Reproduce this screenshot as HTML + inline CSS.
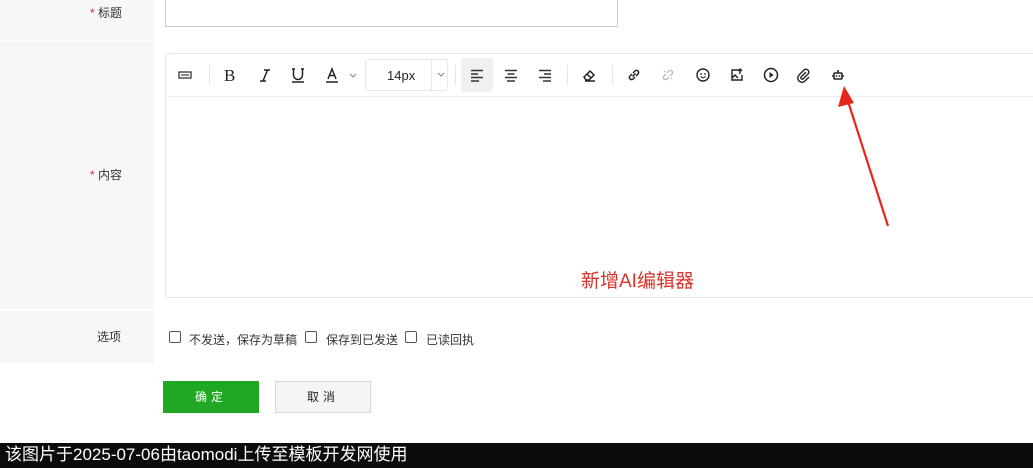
<!DOCTYPE html>
<html><head><meta charset="utf-8"><style>
*{margin:0;padding:0;box-sizing:border-box}
body{width:1033px;height:468px;overflow:hidden;background:#fff;font-family:"Liberation Sans","Noto Sans CJK SC",sans-serif;position:relative;font-size:12px;color:#333}
.abs{position:absolute}
.lab{position:absolute;left:0;width:154px;background:#f7f7f7;text-align:right;padding-right:32px}
.star{color:#c33}
.ic{position:absolute;top:65px;width:20px;height:20px}
.sep{position:absolute;top:65px;width:1px;height:20px;background:#e5e5e5}
.cb{position:absolute;top:331px;width:12px;height:12px;border:1px solid #555;border-radius:2px;background:#fff}
</style></head><body>
<div class="lab" style="top:0;height:40px;line-height:26px">
<span class="star">*</span> 标题</div>
<div class="lab" style="top:41px;height:268px;line-height:268px"><span class="star">*</span> 内容</div>
<div class="lab" style="top:311px;height:52px;line-height:52px;padding-right:33px">选项</div>
<div class="abs" style="left:165px;top:-1px;width:453px;height:28px;border:1px solid #ccc"></div>
<div class="abs" style="left:165px;top:53px;width:880px;height:245px;border:1px solid #e8e8e8;border-radius:4px"></div>
<div class="abs" style="left:166px;top:96px;width:870px;height:1px;background:#ececec"></div>
<svg class="ic" style="left:175px" viewBox="0 0 20 20"><rect x="4" y="7" width="12" height="6" fill="#fff" stroke="#444" stroke-width="1.4"/><rect x="6" y="9" width="8" height="2" fill="#888"/></svg>
<div class="sep" style="left:209px"></div>
<div class="abs" style="left:224px;top:66px;font:17px 'Liberation Serif',serif;color:#222">B</div>
<svg class="ic" style="left:255px" viewBox="0 0 20 20"><path d="M9 5h6M5 16h6M12.5 5L8 16" stroke="#222" stroke-width="1.5" fill="none"/></svg>
<svg class="ic" style="left:288px" viewBox="0 0 20 20"><path d="M5.5 4v6a4.5 4.5 0 009 0V4M4 4h3M13 4h3M4 17h12" stroke="#222" stroke-width="1.5" fill="none"/></svg>
<svg class="ic" style="left:322px" viewBox="0 0 20 20"><path d="M6 14l4-10 4 10M7.5 10.5h5M4 17h12" stroke="#222" stroke-width="1.5" fill="none"/></svg>
<svg class="ic" style="left:343px" viewBox="0 0 20 20"><path d="M7 9l3 3 3-3" stroke="#888" stroke-width="1" fill="none"/></svg>
<div class="abs" style="left:365px;top:59px;width:83px;height:32px;border:1px solid #e8e8e8;border-radius:3px"></div>
<div class="abs" style="left:431px;top:60px;width:1px;height:30px;background:#e8e8e8"></div>
<div class="abs" style="left:387px;top:68px;font-size:13px;color:#222">14px</div>
<svg class="ic" style="left:431px" viewBox="0 0 20 20"><path d="M7 8l3 3 3-3" stroke="#888" stroke-width="1" fill="none"/></svg>
<div class="sep" style="left:455px"></div>
<div class="abs" style="left:461px;top:58px;width:32px;height:34px;background:#f0f0f0;border-radius:3px"></div>
<svg class="ic" style="left:467px" viewBox="0 0 20 20"><path d="M4 5.5h12M4 9h7M4 12.5h12M4 16h8" stroke="#333" stroke-width="1.4"/></svg>
<svg class="ic" style="left:501px" viewBox="0 0 20 20"><path d="M4 5.5h12M6.5 9h7M4 12.5h12M6 16h8" stroke="#333" stroke-width="1.4"/></svg>
<svg class="ic" style="left:535px" viewBox="0 0 20 20"><path d="M4 5.5h12M9 9h7M4 12.5h12M8 16h8" stroke="#333" stroke-width="1.4"/></svg>
<div class="sep" style="left:567px"></div>
<svg class="ic" style="left:579px" viewBox="0 0 20 20"><path d="M5 12l6-6 4 4-5 5H7zM8 9l4 4M6 16h10" stroke="#222" stroke-width="1.5" fill="none"/></svg>
<div class="sep" style="left:612px"></div>
<svg class="ic" style="left:624px" viewBox="0 0 20 20"><path d="M8.5 11.5l3-3M8 9l-2 2a2 2 0 003 3l2-2M12 11l2-2a2 2 0 00-3-3l-2 2" stroke="#222" stroke-width="1.5" fill="none"/></svg>
<svg class="ic" style="left:658px" viewBox="0 0 20 20"><path d="M8 9l-2 2a2 2 0 003 3l2-2M12 11l2-2a2 2 0 00-3-3l-2 2M6 6l1 1M14 14l-1-1" stroke="#bbb" stroke-width="1.3" fill="none"/></svg>
<svg class="ic" style="left:693px" viewBox="0 0 20 20"><circle cx="10" cy="10" r="6" stroke="#222" stroke-width="1.4" fill="none"/><circle cx="8" cy="9" r=".9" fill="#222"/><circle cx="12" cy="9" r=".9" fill="#222"/><path d="M7.5 11.5q2.5 2.5 5 0" stroke="#222" stroke-width="1.1" fill="none"/></svg>
<svg class="ic" style="left:727px" viewBox="0 0 20 20"><path d="M11 5H5v10h10V10M5 13l3-3 3 3M13 9V4M11 6l2-2 2 2" stroke="#222" stroke-width="1.4" fill="none"/></svg>
<svg class="ic" style="left:761px" viewBox="0 0 20 20"><circle cx="10" cy="10" r="6.5" stroke="#222" stroke-width="1.5" fill="none"/><path d="M8.5 7v6l4-3z" fill="#222"/></svg>
<svg class="ic" style="left:794px" viewBox="0 0 20 20"><path d="M12 7l-5 5a1.5 1.5 0 002 2l5.5-5.5a3 3 0 00-4-4L5 10a4 4 0 006 6l4-4" stroke="#222" stroke-width="1.4" fill="none"/></svg>
<svg class="ic" style="left:828px" viewBox="0 0 20 20"><rect x="6" y="8" width="8" height="6" rx="1" stroke="#222" stroke-width="1.6" fill="none"/><path d="M10 5v3M5 11H4M15 11h1" stroke="#222" stroke-width="1.6"/><circle cx="8.5" cy="11" r=".9" fill="#222"/><circle cx="11.5" cy="11" r=".9" fill="#222"/></svg>
<svg class="abs" style="left:830px;top:80px" width="70" height="160" viewBox="0 0 70 160"><path d="M15 12L58 146" stroke="#e5261c" stroke-width="2.2"/><path d="M14 6L8 27L24 23z" fill="#e5261c"/></svg>
<div class="abs" style="left:581px;top:266px;font-size:19px;color:#d9332b">新增AI编辑器</div>
<div class="cb" style="left:169px"></div><div class="abs" style="left:189px;top:331px;font-size:12px">不发送，保存为草稿</div>
<div class="cb" style="left:305px"></div><div class="abs" style="left:326px;top:331px;font-size:12px">保存到已发送</div>
<div class="cb" style="left:405px"></div><div class="abs" style="left:426px;top:331px;font-size:12px">已读回执</div>
<div class="abs" style="left:163px;top:381px;width:96px;height:32px;background:#20a825;color:#fff;text-align:center;line-height:32px;letter-spacing:4px">确定</div>
<div class="abs" style="left:275px;top:381px;width:96px;height:32px;background:#f5f5f5;border:1px solid #d8d8d8;color:#222;text-align:center;line-height:30px;letter-spacing:4px">取消</div>
<div class="abs" style="left:0;top:443px;width:1033px;height:25px;background:#0c0c0c;color:#fff;font-size:17px;line-height:24px;padding-left:5px">该图片于2025-07-06由taomodi上传至模板开发网使用</div>
</body></html>
